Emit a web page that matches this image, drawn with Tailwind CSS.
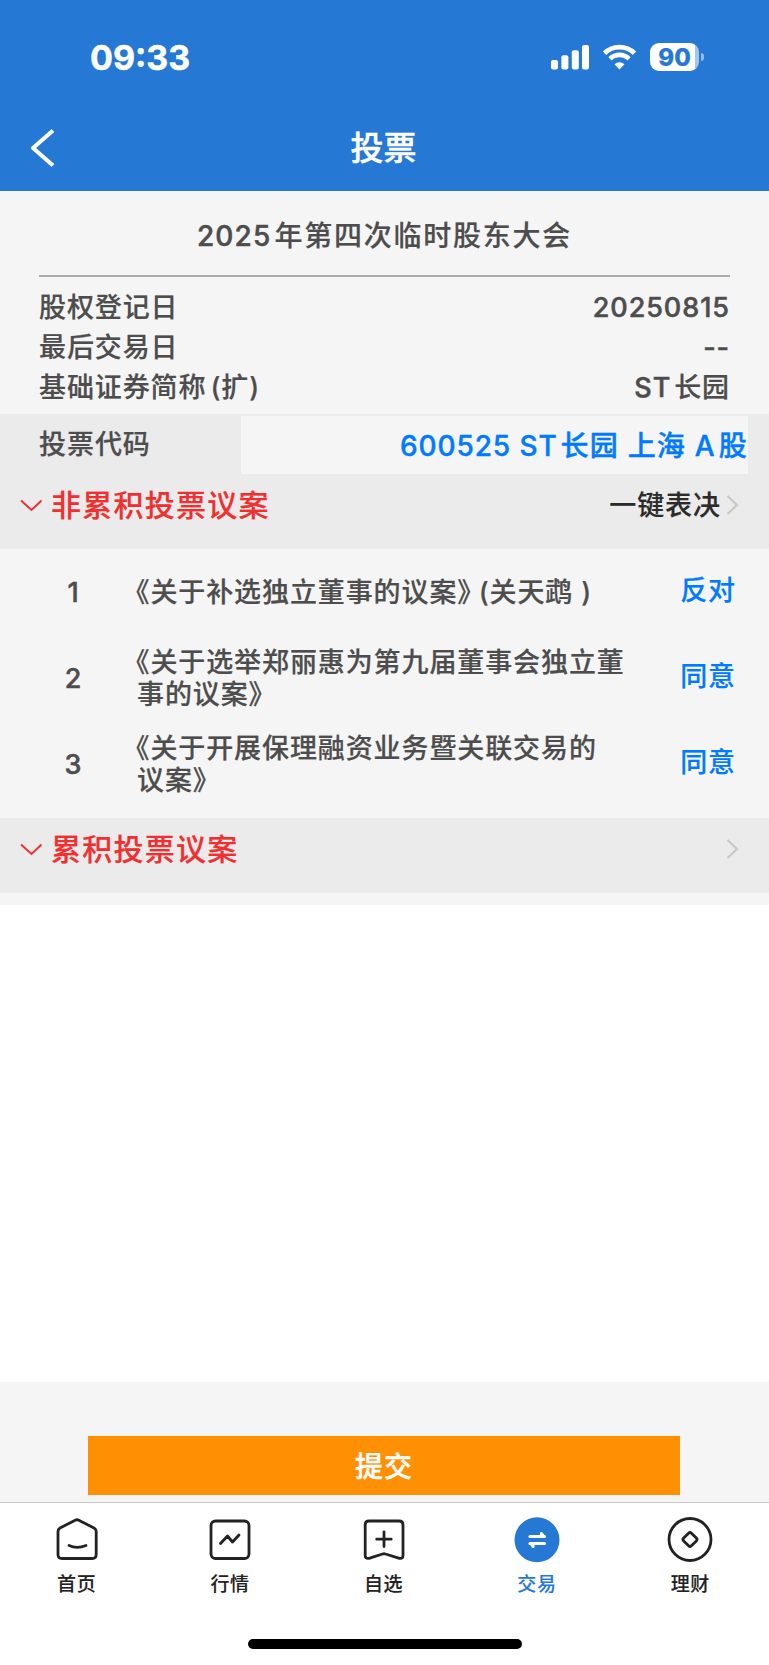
<!DOCTYPE html>
<html lang="zh-CN">
<head>
    <meta charset="UTF-8" />
    <meta name="viewport" content="width=device-width, initial-scale=1.0" />
    <title>投票</title>
    <script src="https://cdn.jsdelivr.net/npm/@tailwindcss/browser@4"></script>
</head>
<body class="bg-white font-['Inter','Noto_Sans_CJK_SC',sans-serif] font-medium text-[#4d4d4d] [-webkit-text-stroke:0.2px]">
<div class="flex h-[1665px] w-[769px] flex-col overflow-hidden">

    <!-- 状态栏 + 标题栏 -->
    <header class="h-[191px] shrink-0 bg-[#2578d4] text-white">
        <div class="flex h-[105px] items-start justify-between pt-[37px] pr-[65px] pl-[90px]">
            <span class="text-[34px] leading-[41px] font-bold [-webkit-text-stroke:0.5px]">09:33</span>
            <div class="flex items-center pt-[6px]">
                <svg class="mr-[14px] h-[28px] w-[38px]" viewBox="0 0 38 28" fill="currentColor">
                    <rect x="0" y="17" width="7" height="9.5" rx="2" />
                    <rect x="10.4" y="12.3" width="7" height="14.2" rx="2" />
                    <rect x="20.8" y="7.2" width="7" height="19.3" rx="2" />
                    <rect x="31" y="2" width="7" height="24.5" rx="2" />
                </svg>
                <svg class="mr-[14px] h-[28px] w-[33px]" viewBox="0 0 33 28" fill="none" stroke="currentColor">
                    <path d="M1.5 10.3a21.3 21.3 0 0 1 30 0" stroke-width="4.8" />
                    <path d="M7 15.8a13.5 13.5 0 0 1 19 0" stroke-width="4.6" />
                    <path d="M16.5 26.5l-5-5.2a7.2 7.2 0 0 1 10 0z" fill="currentColor" stroke="none" />
                </svg>
                <div class="flex h-[28px] w-[49px] items-center justify-center overflow-hidden rounded-[9px] bg-linear-to-r from-white from-91% to-[#a3c6ee] to-91% pt-[1px] text-[24px] font-extrabold text-[#2578d4]"><span>90</span></div>
                <div class="ml-[2px] h-[8px] w-[3px] rounded-r-full bg-[#92bbe9]"></div>
            </div>
        </div>
        <div class="grid h-[86px] grid-cols-[80px_1fr_80px] items-center">
            <svg class="ml-[29px] h-[42px] w-[28px]" viewBox="0 0 28 42" fill="none" stroke="white" stroke-width="4">
                <path d="M24 3.5L4 21l20 17.5" stroke-linejoin="round" />
            </svg>
            <h1 class="pt-[2px] pr-[2px] text-center text-[33px] [-webkit-text-stroke:0.4px]">投票</h1>
        </div>
    </header>

    <!-- 会议信息 -->
    <section class="h-[223px] shrink-0 bg-[#f5f5f5] px-[39px]">
        <h2 class="flex h-[86px] items-center justify-center border-b-2 border-[#a9adab] pt-[5px] text-[28px] tracking-[1.75px]">
            <span class="mr-[3px] tracking-[1.2px] [-webkit-text-stroke:0.5px]">2025</span>年第四次临时股东大会
        </h2>
        <dl class="pt-[11px] text-[27px] tracking-[0.9px]">
            <div class="flex h-[40px] items-center justify-between"><dt>股权登记日</dt><dd class="tracking-[0.95px] [-webkit-text-stroke:0.5px]">20250815</dd></div>
            <div class="flex h-[40px] items-center justify-between"><dt>最后交易日</dt><dd class="[-webkit-text-stroke:0.5px]">--</dd></div>
            <div class="flex h-[41px] items-center justify-between"><dt>基础证券简称<span class="ml-[4px]">(扩)</span></dt><dd><span class="mr-[3px] [-webkit-text-stroke:0.5px]">ST</span>长园</dd></div>
        </dl>
    </section>

    <!-- 投票代码 -->
    <section class="h-[135px] shrink-0 bg-[#ebebeb]">
        <div class="flex h-[62px] items-center pr-[21px] pl-[39px]">
            <span class="w-[202px] text-[27px] tracking-[0.95px]">投票代码</span>
            <div class="flex h-[58px] flex-1 items-center justify-end bg-[#f5f5f5] pt-[1px] text-[28px] tracking-[1.2px] whitespace-pre text-[#007aff] [-webkit-text-stroke:0.4px]"><span class="tracking-[0.9px]">600525 ST</span><span class="ml-[3px]">长园 上海 A</span><span class="ml-[3px]">股</span></div>
        </div>
        <div class="flex h-[58px] items-center pr-[30px] pl-[20px]">
            <svg class="mr-[8px] h-[14px] w-[23px]" viewBox="0 0 23 14" fill="none" stroke="#f03030" stroke-width="2"><path d="M1 2.5l10.5 9.5L21.5 2.5" /></svg>
            <span class="flex-1 text-[30px] tracking-[1.25px] text-[#f03030]">非累积投票议案</span>
            <span class="pt-[2px] text-[27px] tracking-[0.95px] text-[#2b2b2b]">一键表决</span>
            <svg class="ml-[5px] h-[20px] w-[13px]" viewBox="0 0 13 20" fill="none" stroke="#c8c8c8" stroke-width="2.2"><path d="M1.5 1l9.5 9-9.5 9" /></svg>
        </div>
    </section>

    <!-- 议案列表 -->
    <section class="h-[269px] shrink-0 bg-[#f5f5f5] text-[27px] leading-[32.5px] tracking-[0.9px]">
        <div class="flex h-[86px] items-center pt-[2px] pr-[33px]">
            <span class="w-[147px] text-center [-webkit-text-stroke:0.5px]">1</span>
            <p class="-ml-[10px] flex-1 whitespace-pre"><span class="-ml-[1px] [font-feature-settings:'halt']">《</span>关于补选独立董事的议案<span class="mr-[7px] [font-feature-settings:'halt']">》</span>(关天鹉 )</p>
            <span class="pb-[4px] text-[#007aff]">反对</span>
        </div>
        <div class="flex h-[86px] items-center pt-[2px] pr-[33px]">
            <span class="w-[147px] text-center [-webkit-text-stroke:0.5px]">2</span>
            <p class="-ml-[10px] flex-1"><span class="-ml-[1px] [font-feature-settings:'halt']">《</span>关于选举郑丽惠为第九届董事会独立董<br />事的议案<span class="[font-feature-settings:'halt']">》</span></p>
            <span class="pb-[4px] text-[#007aff]">同意</span>
        </div>
        <div class="flex h-[86px] items-center pt-[2px] pr-[33px]">
            <span class="w-[147px] text-center [-webkit-text-stroke:0.5px]">3</span>
            <p class="-ml-[10px] flex-1"><span class="-ml-[1px] [font-feature-settings:'halt']">《</span>关于开展保理融资业务暨关联交易的<br />议案<span class="[font-feature-settings:'halt']">》</span></p>
            <span class="pb-[4px] text-[#007aff]">同意</span>
        </div>
    </section>
    <section class="h-[75px] shrink-0 bg-[#ebebeb]">
        <div class="flex h-[62px] items-center pr-[30px] pl-[20px]">
            <svg class="mr-[8px] h-[14px] w-[23px]" viewBox="0 0 23 14" fill="none" stroke="#f03030" stroke-width="2"><path d="M1 2.5l10.5 9.5L21.5 2.5" /></svg>
            <span class="flex-1 text-[30px] tracking-[1.25px] text-[#f03030]">累积投票议案</span>
            <svg class="h-[20px] w-[13px]" viewBox="0 0 13 20" fill="none" stroke="#c8c8c8" stroke-width="2.2"><path d="M1.5 1l9.5 9-9.5 9" /></svg>
        </div>
    </section>
    <div class="h-[12px] shrink-0 bg-[#f5f5f5]"></div>
    <div class="flex-1"></div>

    <!-- 提交 -->
    <div class="h-[120px] shrink-0 bg-[#f5f5f5] pt-[54px] pr-[89px] pl-[88px]">
        <button class="block h-[59px] w-full bg-[#ff9004] pt-[2px] text-[28px] tracking-[1px] text-white [-webkit-text-stroke:0.4px]">提交</button>
    </div>

    <!-- 底部导航 -->
    <footer class="h-[163px] shrink-0 border-t border-[#c8c8c8] bg-white">
        <nav class="grid h-[136px] w-[767px] grid-cols-5 pt-[14px] text-[19px] leading-[28px] tracking-[0.6px] text-[#222] [-webkit-text-stroke:0.1px]">
            <a class="flex flex-col items-center gap-[8px]">
                <svg class="h-[46px] w-[46px]" viewBox="0 0 46 46" fill="none" stroke="currentColor" stroke-width="2.8" stroke-linecap="round" stroke-linejoin="round">
                    <path d="M21.2 3.2q1.8-.9 3.6 0L40 11q2.2 1.2 2.2 3.5V37.5q0 4-4 4H8q-4 0-4-4V14.5q0-2.3 2-3.5z" />
                    <path d="M15 28.5q8 3.6 17 0" />
                </svg>
                <span>首页</span>
            </a>
            <a class="flex flex-col items-center gap-[8px]">
                <svg class="h-[46px] w-[46px]" viewBox="0 0 46 46" fill="none" stroke="currentColor" stroke-width="2.8" stroke-linecap="round" stroke-linejoin="round">
                    <rect x="4" y="4" width="38" height="37.5" rx="4.5" />
                    <path d="M13.5 26.5l7-7.5 5 6L32 18" />
                </svg>
                <span>行情</span>
            </a>
            <a class="flex flex-col items-center gap-[8px]">
                <svg class="ml-[1px] h-[46px] w-[46px]" viewBox="0 0 46 46" fill="none" stroke="currentColor" stroke-width="2.8" stroke-linecap="round" stroke-linejoin="round">
                    <path d="M8 4h30q4 0 4 4V38.5q0 3.5-3.5 2.8L24.5 37q-1.5-.5-3 0L8 41.3q-3.8.7-3.8-2.8V8q0-4 3.8-4z" />
                    <path d="M23 15v14.5M15.7 22.2h14.5" />
                </svg>
                <span>自选</span>
            </a>
            <a class="flex flex-col items-center gap-[8px] text-[#2578d4]">
                <svg class="h-[46px] w-[46px]" viewBox="0 0 46 46">
                    <circle cx="23" cy="22.8" r="22.5" fill="currentColor" />
                    <path d="M16 19.5h14.5M16 26.5h14.5" fill="none" stroke="white" stroke-width="3.2" stroke-linecap="round" />
                    <path d="M26 15.5q1.5-1.2 2.8.2l3 4.2h-5.8zM20.5 30.5q-1.5 1.2-2.8-.2l-3-4.2h5.8z" fill="white" />
                </svg>
                <span>交易</span>
            </a>
            <a class="flex flex-col items-center gap-[8px]">
                <svg class="h-[46px] w-[46px]" viewBox="0 0 46 46" fill="none" stroke="currentColor" stroke-width="2.8">
                    <circle cx="23" cy="22.5" r="21" />
                    <rect x="17.5" y="17" width="11" height="11" rx="2" transform="rotate(45 23 22.5)" />
                </svg>
                <span>理财</span>
            </a>
        </nav>
        <div class="mx-auto h-[10px] w-[274px] rounded-full bg-black"></div>
    </footer>
</div>
</body>
</html>
